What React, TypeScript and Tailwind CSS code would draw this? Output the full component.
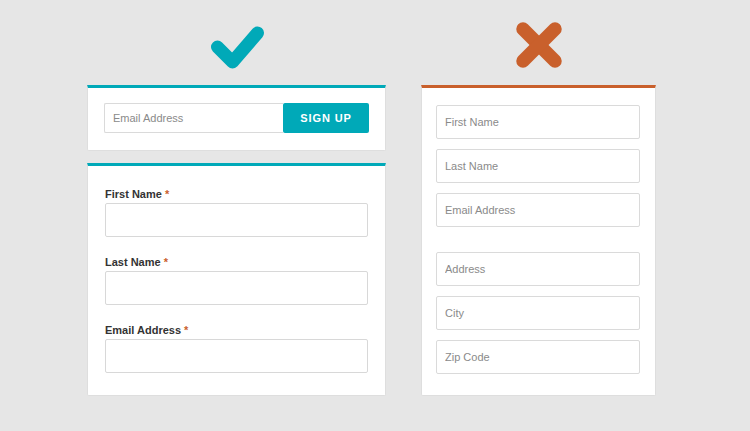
import React from "react";

const font = { fontFamily: '"Liberation Sans", Arial, sans-serif' };

function CheckIcon() {
  return (
    <svg width="60" height="50" viewBox="0 0 60 50" className="mt-[22px]">
      <polyline
        points="10.5,25 25.5,40 50.5,11"
        fill="none"
        stroke="#00a9b8"
        strokeWidth="13"
        strokeLinecap="round"
        strokeLinejoin="round"
      />
    </svg>
  );
}

function CrossIcon() {
  return (
    <svg width="50" height="50" viewBox="0 0 50 50" className="mt-[20px]">
      <g stroke="#c9602c" strokeWidth="13.5" strokeLinecap="round">
        <line x1="9" y1="9" x2="41" y2="41" />
        <line x1="41" y1="9" x2="9" y2="41" />
      </g>
    </svg>
  );
}

function Field({ label }: { label: string }) {
  return (
    <div>
      <p className="mb-[2px] text-[11px] leading-[14px] font-bold text-[#333]">
        {label} <span className="text-[#c9602c]">*</span>
      </p>
      <input
        className="block h-[34px] w-full rounded-[2px] border border-[#d8d8d8] bg-white px-2 outline-none"
        style={font}
      />
    </div>
  );
}

function PlainInput({ placeholder }: { placeholder: string }) {
  return (
    <input
      placeholder={placeholder}
      className="block h-[34px] w-full rounded-[2px] border border-[#dadada] bg-white px-2 text-[11px] text-[#333] outline-none placeholder:text-[#8a8a8a]"
      style={font}
    />
  );
}

export default function App() {
  return (
    <div className="flex h-[431px] w-[750px] gap-[35px] bg-[#e6e6e6] pl-[87px]" style={font}>
      <div className="flex w-[299px] flex-col">
        <div className="flex h-[85px] justify-center">
          <CheckIcon />
        </div>
        <div className="flex rounded-b-[2px] border-x border-b border-t-[3px] border-x-[#dedede] border-b-[#dedede] border-t-[#00a9b8] bg-white px-[16px] pt-[15px] pb-[17px]">
          <input
            placeholder="Email Address"
            className="h-[30px] w-[179px] rounded-l-[2px] border border-r-0 border-[#dadada] bg-white px-2 text-[11px] outline-none placeholder:text-[#8a8a8a]"
            style={font}
          />
          <button className="h-[30px] flex-1 rounded-[2px] bg-[#00a9b8] text-[11px] font-extrabold tracking-[0.08em] text-white">
            SIGN UP
          </button>
        </div>
        <div className="mt-[12px] flex flex-col gap-[18px] rounded-b-[2px] border-x border-b border-t-[3px] border-x-[#dedede] border-b-[#dedede] border-t-[#00a9b8] bg-white px-[17px] pt-[21px] pb-[22px]">
          <Field label="First Name" />
          <Field label="Last Name" />
          <Field label="Email Address" />
        </div>
      </div>
      <div className="flex w-[235px] flex-col">
        <div className="flex h-[85px] justify-center">
          <CrossIcon />
        </div>
        <div className="flex flex-col rounded-b-[2px] border-x border-b border-t-[3px] border-x-[#dedede] border-b-[#dedede] border-t-[#c9602c] bg-white pt-[17px] pr-[15px] pb-[21px] pl-[14px]">
          <div className="flex flex-col gap-[10px]">
            <PlainInput placeholder="First Name" />
            <PlainInput placeholder="Last Name" />
            <PlainInput placeholder="Email Address" />
          </div>
          <div className="mt-[25px] flex flex-col gap-[10px]">
            <PlainInput placeholder="Address" />
            <PlainInput placeholder="City" />
            <PlainInput placeholder="Zip Code" />
          </div>
        </div>
      </div>
    </div>
  );
}
